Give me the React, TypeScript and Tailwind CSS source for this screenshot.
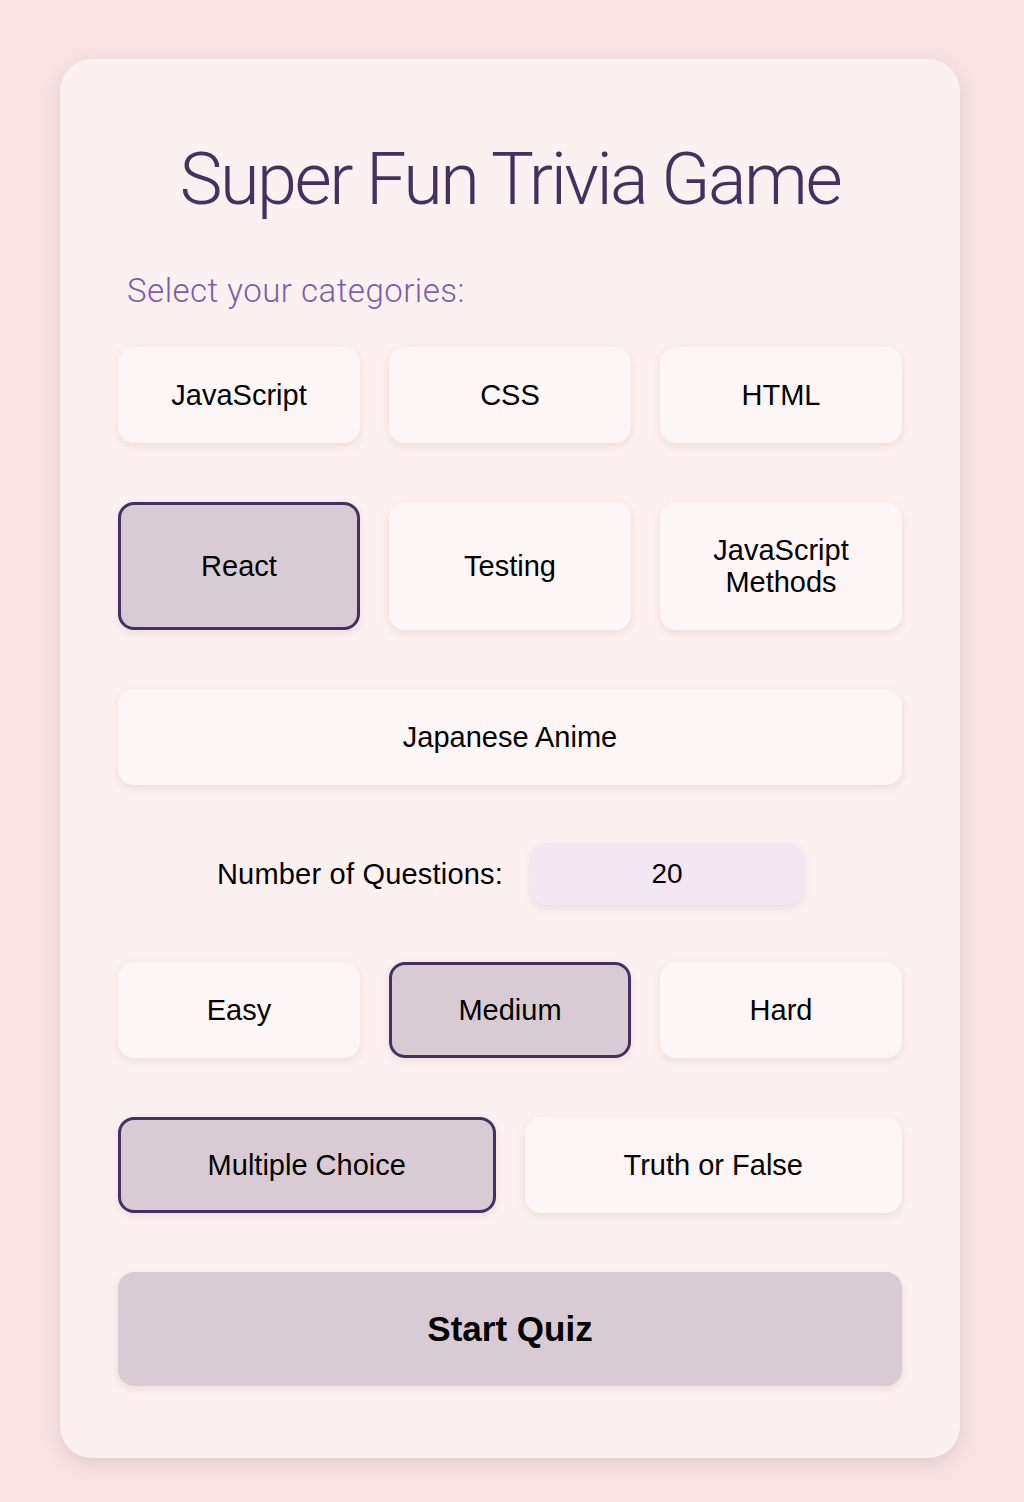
import { useState } from 'react';

const categories = ['JavaScript', 'CSS', 'HTML', 'React', 'Testing', 'JavaScript Methods'];
const difficulties = ['Easy', 'Medium', 'Hard'];
const types = ['Multiple Choice', 'Truth or False'];

function OptionButton({
  label,
  selected,
  onClick,
  className = '',
}: {
  label: string;
  selected: boolean;
  onClick: () => void;
  className?: string;
}) {
  return (
    <button
      onClick={onClick}
      className={
        'rounded-2xl py-[29px] px-6 text-[29px] leading-[32px] text-black shadow-[0_3px_8px_rgba(120,80,90,0.12)] ' +
        (selected
          ? 'bg-[#d8cbd3] border-[3px] border-[#45305f]'
          : 'bg-[#fdf6f6] border-[3px] border-transparent') +
        ' ' +
        className
      }
    >
      {label}
    </button>
  );
}

export default function App() {
  const [selectedCats, setSelectedCats] = useState<string[]>(['React']);
  const [difficulty, setDifficulty] = useState('Medium');
  const [type, setType] = useState('Multiple Choice');
  const [count, setCount] = useState('20');

  const toggleCat = (c: string) =>
    setSelectedCats((prev) => (prev.includes(c) ? prev.filter((x) => x !== c) : [...prev, c]));

  return (
    <div className="min-h-screen bg-[#f8e3e2] pt-[59px] pb-[45px] font-['Liberation_Sans',Arial,sans-serif]">
      <div className="ml-[60px] w-[900px] rounded-[32px] bg-[#fdf0f0] px-[58px] pt-[78px] pb-[72px] shadow-[0_6px_18px_rgba(110,60,70,0.14)]">
        <h1 className="text-center font-['Roboto',sans-serif] font-light text-[72px] leading-[86px] tracking-[-2.5px] text-[#45305f]">
          Super Fun Trivia Game
        </h1>

        <p className="mt-[48px] mb-[36px] pl-[9px] font-['Roboto',sans-serif] font-light text-[33px] leading-[40px] tracking-[0.5px] text-[#7b5eab]">
          Select your categories:
        </p>

        <div className="grid grid-cols-3 gap-x-[29px] gap-y-[59px]">
          {categories.map((c) => (
            <OptionButton key={c} label={c} selected={selectedCats.includes(c)} onClick={() => toggleCat(c)} />
          ))}
          <OptionButton
            label="Japanese Anime"
            selected={selectedCats.includes('Japanese Anime')}
            onClick={() => toggleCat('Japanese Anime')}
            className="col-span-3"
          />
        </div>

        <div className="mt-[58px] flex items-center justify-center gap-[28px]">
          <label className="text-[29px] leading-[32px] tracking-[0.2px] text-black">Number of Questions:</label>
          <input
            value={count}
            onChange={(e) => setCount(e.target.value)}
            className="h-[62px] w-[272px] rounded-2xl bg-[#f3e7f3] text-center text-[28px] text-black outline-none shadow-[0_3px_8px_rgba(120,80,90,0.12)]"
          />
        </div>

        <div className="mt-[57px] grid grid-cols-3 gap-x-[29px]">
          {difficulties.map((d) => (
            <OptionButton key={d} label={d} selected={difficulty === d} onClick={() => setDifficulty(d)} />
          ))}
        </div>

        <div className="mt-[59px] grid grid-cols-2 gap-x-[29px]">
          {types.map((t) => (
            <OptionButton key={t} label={t} selected={type === t} onClick={() => setType(t)} />
          ))}
        </div>

        <button className="mt-[59px] h-[114px] w-full rounded-2xl bg-[#d8cbd3] text-[35px] font-bold text-black shadow-[0_3px_8px_rgba(120,80,90,0.12)]">
          Start Quiz
        </button>
      </div>
    </div>
  );
}
